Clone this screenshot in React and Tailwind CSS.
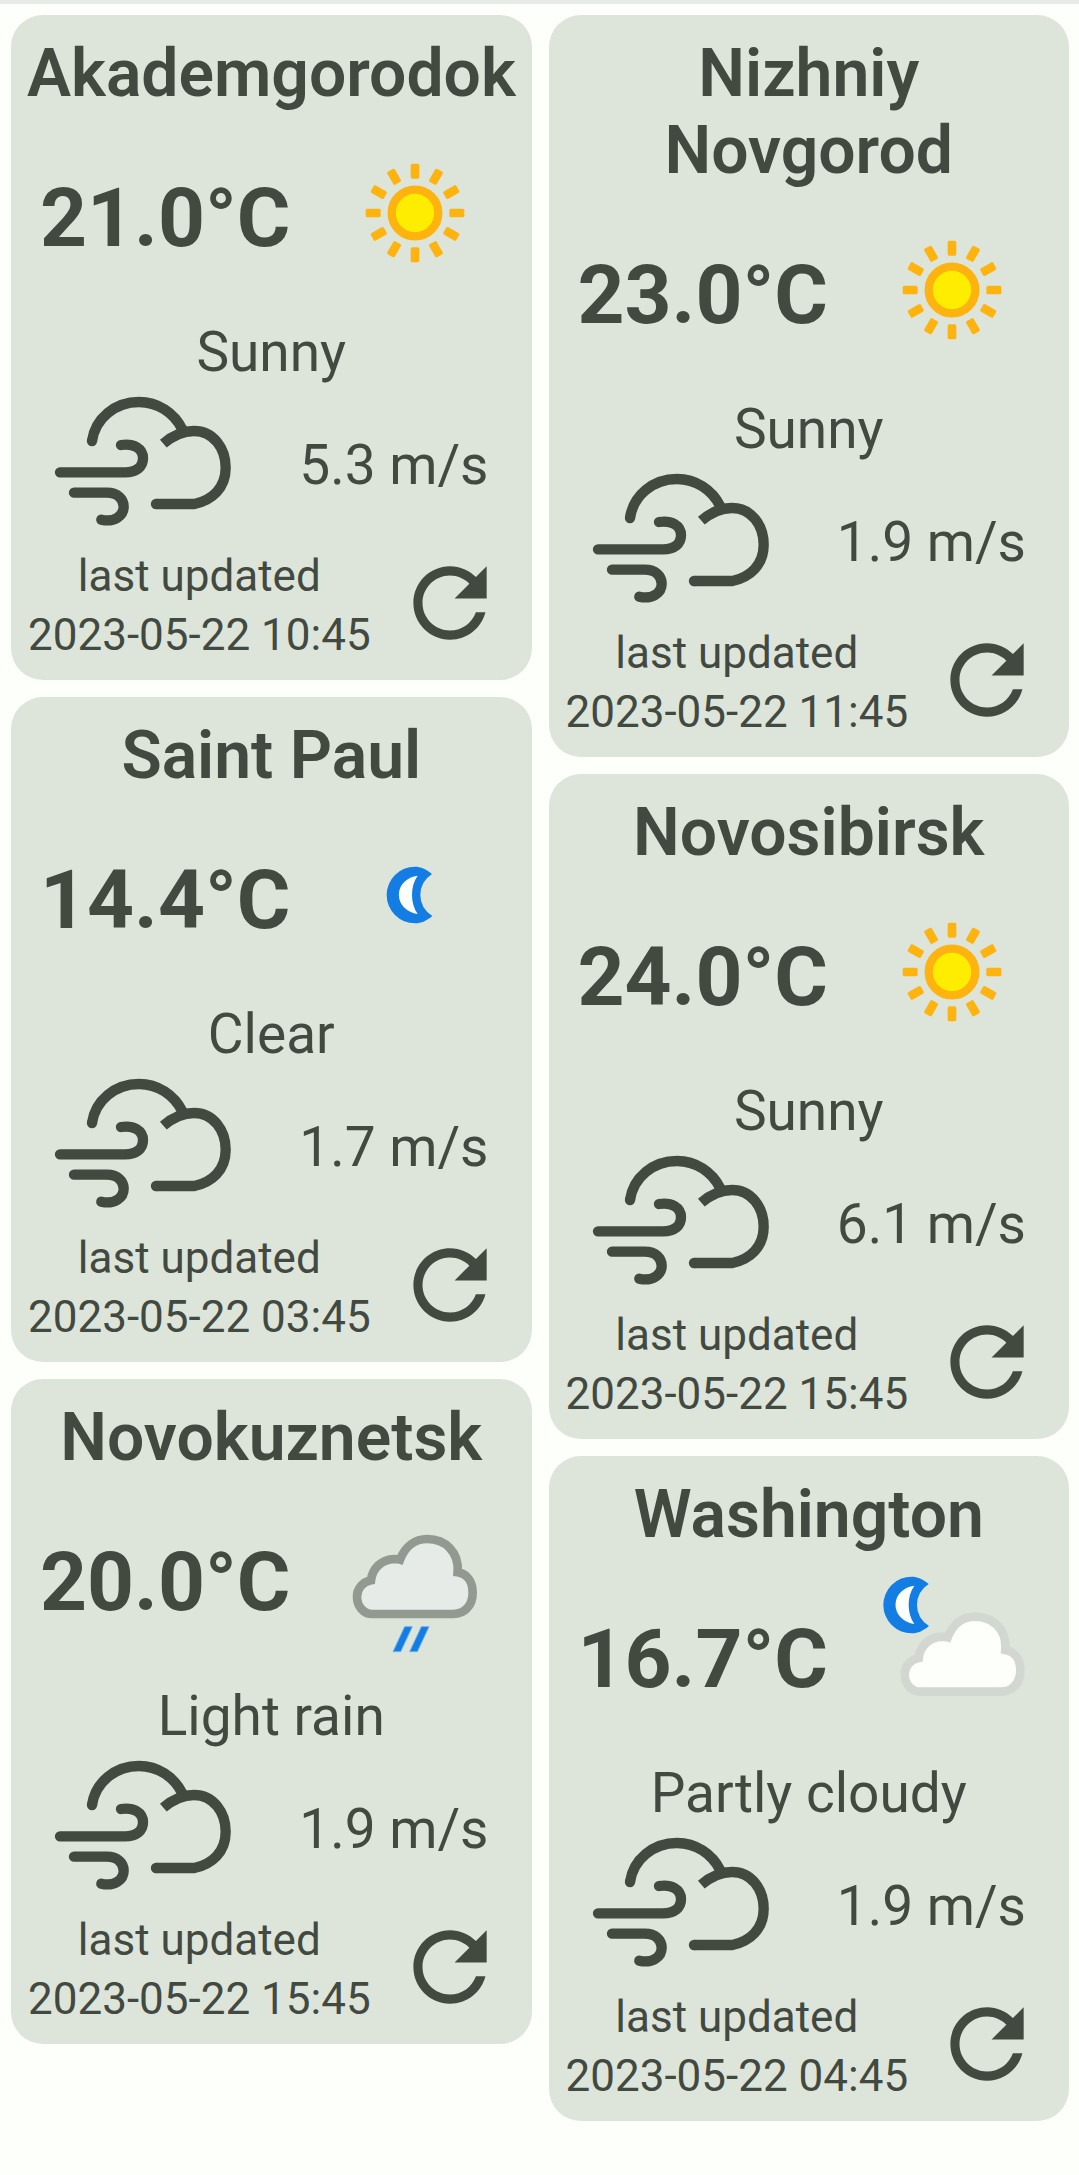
const leftColumn = [
  { city: 'Akademgorodok', temp: '21.0°C', icon: 'sun', text: 'Sunny', wind: '5.3 m/s', updated: '2023-05-22 10:45' },
  { city: 'Saint Paul', temp: '14.4°C', icon: 'moon', text: 'Clear', wind: '1.7 m/s', updated: '2023-05-22 03:45' },
  { city: 'Novokuznetsk', temp: '20.0°C', icon: 'rain', text: 'Light rain', wind: '1.9 m/s', updated: '2023-05-22 15:45' },
];

const rightColumn = [
  { city: 'Nizhniy Novgorod', temp: '23.0°C', icon: 'sun', text: 'Sunny', wind: '1.9 m/s', updated: '2023-05-22 11:45' },
  { city: 'Novosibirsk', temp: '24.0°C', icon: 'sun', text: 'Sunny', wind: '6.1 m/s', updated: '2023-05-22 15:45' },
  { city: 'Washington', temp: '16.7°C', icon: 'cloudNight', text: 'Partly cloudy', wind: '1.9 m/s', updated: '2023-05-22 04:45' },
];

const CLOUD =
  'M97 312C70 312 51 288 51 260C51 236 68 215 93 211C97 175 125 148 163 147Q173 147 180 149C195 110 225 87 262 87C315 87 358 125 353 187C382 192 398 215 398 248C398 285 375 312 340 312Z';

const RAY_ANGLES = [0, 30, 60, 90, 120, 150, 180, 210, 240, 270, 300, 330];

function Moon() {
  return (
    <>
      <path
        fill="#147de3"
        d="M246 102C228 86 212 80 195 80A85 85 0 0 0 195 250C215 250 230 242 247 228Q211 205 211 165Q211 125 246 102Z"
      />
      <path fill="#fdfffa" d="M203 107A65 58 0 0 0 203 222Q186 198 186 165Q186 131 203 107Z" />
    </>
  );
}

function Sun() {
  return (
    <>
      {RAY_ANGLES.map((a) => (
        <rect key={a} x="182" y="41" width="26" height="45" rx="5" fill="#ffb30f" transform={`rotate(${a} 195 189)`} />
      ))}
      <circle cx="195" cy="189" r="70" fill="#ffed00" stroke="#ffb30f" strokeWidth="25" />
    </>
  );
}

function WeatherIcon({ name, label }) {
  const views = {
    sun: '-69 -75 528 528',
    moon: '-69 -99 528 528',
    rain: '-39 -63 528 528',
    cloudNight: '-18 18 528 528',
  };
  return (
    <svg className="size-44 shrink-0" viewBox={views[name]} role="img" aria-label={label}>
      {name === 'sun' && <Sun />}
      {name === 'moon' && <Moon />}
      {name === 'rain' && (
        <>
          <path d={CLOUD} fill="#e6ebe7" stroke="#919991" strokeWidth="26" />
          <path
            d="M194 350H217L182 425H159ZM244 350H267L232 425H209Z"
            fill="#147de3"
            stroke="#6fb0ec"
            strokeWidth="3"
          />
        </>
      )}
      {name === 'cloudNight' && (
        <>
          <g transform="translate(-70 -30)">
            <Moon />
          </g>
          <path d={CLOUD} transform="translate(53 83)" fill="#fdfffa" stroke="#d2d8d1" strokeWidth="26" />
        </>
      )}
    </svg>
  );
}

function WindIcon() {
  return (
    <svg
      className="h-[162px] w-[200px] shrink-0"
      viewBox="0 12 600 486"
      fill="none"
      stroke="currentColor"
      strokeWidth="31"
      aria-hidden="true"
    >
      <path d="M156 183C166 115 225 66 297 66C353 66 402 98 427 148" />
      <circle cx="156" cy="183" r="15.500" fill="currentColor" stroke="none" />
      <path d="M370 191C398 167 427 153 462 153C520 153 557 205 557 263C557 325 515 361 463 372H348" />
      <circle cx="348" cy="372" r="15.500" fill="currentColor" stroke="none" />
      <path strokeLinecap="round" d="M60 277H255C290 277 309 260 309 235C309 205 280 189 243 195" />
      <path strokeLinecap="round" d="M102 338H200C233 338 251 357 251 380C251 408 222 428 184 419" />
    </svg>
  );
}

function RefreshIcon() {
  return (
    <svg className="size-[110px]" viewBox="0 0 24 24" fill="currentColor" aria-hidden="true">
      <path d="M17.65 6.35C16.2 4.9 14.21 4 12 4c-4.42 0-7.99 3.58-7.99 8s3.57 8 7.99 8c3.73 0 6.84-2.55 7.73-6h-2.08c-.82 2.33-3.04 4-5.65 4-3.31 0-6-2.69-6-6s2.69-6 6-6c1.66 0 3.14.69 4.22 1.78L13 11h7V4l-2.35 2.35z" />
    </svg>
  );
}

function WeatherCard({ city, temp, icon, text, wind, updated }) {
  return (
    <article className="rounded-[32px] bg-[#dde5db] px-4 pt-5 pb-[15px]">
      <h2 className="text-center text-[66px] leading-[77px] font-semibold">{city}</h2>
      <div className="mt-[13px] flex items-center justify-between px-[13px]">
        <p className="pt-[10px] text-[82px] leading-[96px] font-bold">{temp}</p>
        <WeatherIcon name={icon} label={text} />
      </div>
      <p className="mt-[19px] text-center text-[55px] leading-[64px]">{text}</p>
      <div className="flex items-center justify-between pr-[27px] pl-[13px]">
        <WindIcon />
        <p className="text-[55px] leading-[64px]">{wind}</p>
      </div>
      <div className="mt-px flex items-center justify-between pr-[11px] pl-px">
        <p className="text-center text-[44px] leading-[59px] whitespace-nowrap">
          last updated
          <br />
          {updated}
        </p>
        <button type="button" aria-label={`Refresh ${city}`} className="mb-[6px] shrink-0">
          <RefreshIcon />
        </button>
      </div>
    </article>
  );
}

export default function App() {
  return (
    <main className="min-h-screen border-t-4 border-[#e6ebe7] bg-[#fdfffa] font-['Roboto',sans-serif] text-[#424940]">
      <div className="grid grid-cols-2 gap-[17px] pt-[11px] pr-[10px] pb-4 pl-[11px]">
        {[leftColumn, rightColumn].map((cards, i) => (
          <div key={i} className="flex flex-col gap-[17px]">
            {cards.map((card) => (
              <WeatherCard key={card.city} {...card} />
            ))}
          </div>
        ))}
      </div>
    </main>
  );
}
